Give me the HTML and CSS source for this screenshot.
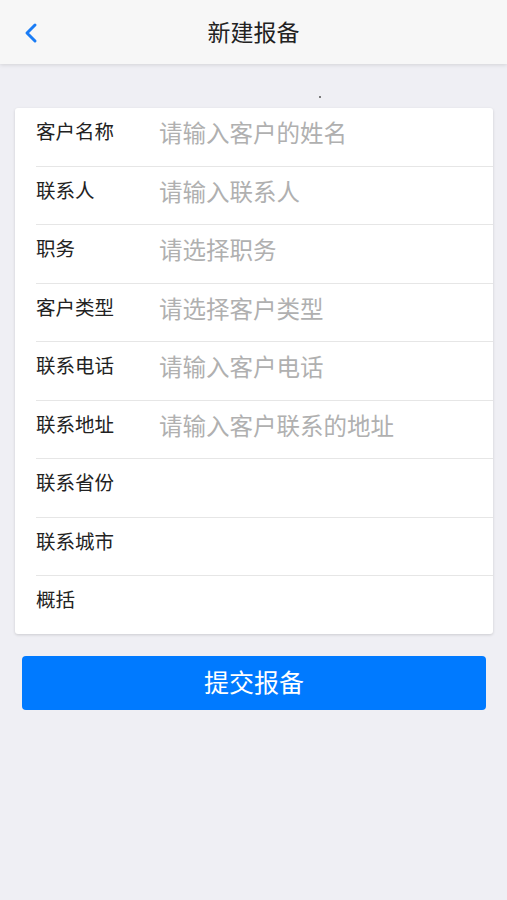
FILE: index.html
```html
<!DOCTYPE html>
<html lang="zh">
<head>
    <meta charset="UTF-8">
    <meta name="viewport" content="width=device-width, initial-scale=1.0">
    <title>新建报备</title>
    <link rel="stylesheet" href="styles.css">
</head>
<body>
    <div class="nav-bar">
        <span class="nav-back">
            <svg width="14" height="22" viewBox="0 0 14 22">
                <path d="M11 3 L3 11 L11 19" fill="none" stroke="#1a7cf5" stroke-width="3" stroke-linecap="round" stroke-linejoin="round"/>
            </svg>
        </span>
        <h1 class="nav-title">新建报备</h1>
    </div>

    <div class="dot-row"><span class="dot"></span></div>

    <div class="form-card">
        <div class="form-row">
            <label class="form-label">客户名称</label>
            <input class="form-input" type="text" placeholder="请输入客户的姓名">
        </div>
        <div class="form-row">
            <label class="form-label">联系人</label>
            <input class="form-input" type="text" placeholder="请输入联系人">
        </div>
        <div class="form-row">
            <label class="form-label">职务</label>
            <input class="form-input" type="text" placeholder="请选择职务">
        </div>
        <div class="form-row">
            <label class="form-label">客户类型</label>
            <input class="form-input" type="text" placeholder="请选择客户类型">
        </div>
        <div class="form-row">
            <label class="form-label">联系电话</label>
            <input class="form-input" type="text" placeholder="请输入客户电话">
        </div>
        <div class="form-row">
            <label class="form-label">联系地址</label>
            <input class="form-input" type="text" placeholder="请输入客户联系的地址">
        </div>
        <div class="form-row">
            <label class="form-label">联系省份</label>
        </div>
        <div class="form-row">
            <label class="form-label">联系城市</label>
        </div>
        <div class="form-row">
            <label class="form-label">概括</label>
        </div>
    </div>

    <button class="submit-button">提交报备</button>
</body>
</html>
```

FILE: styles.css
```css
body {
    margin: 0;
    padding: 0;
    background-color: #efeff4;
    font-family: "Noto Sans CJK SC", "Noto Sans", sans-serif;
    color: #222;
}

.nav-bar {
    height: 64px;
    background-color: #f7f7f7;
    box-shadow: 0 1px 4px rgba(0, 0, 0, 0.12);
    display: flex;
    align-items: center;
}

.nav-back {
    display: flex;
    margin-left: 24px;
    margin-top: 1px;
}

.nav-title {
    margin: 0 38px 2px 0;
    font-size: 23px;
    font-weight: normal;
    color: #222;
    flex: 1;
    text-align: center;
}

.dot-row {
    height: 2px;
    padding-top: 32px;
    padding-left: 319px;
}

.dot {
    display: block;
    width: 2px;
    height: 2px;
    background-color: #555;
    border-radius: 1px;
}

.form-card {
    margin: 10px 14px 0 15px;
    background-color: #fff;
    border-radius: 3px;
    box-shadow: 0 1px 3px rgba(0, 0, 0, 0.15);
    padding-left: 21px;
}

.form-row {
    height: 57.5px;
    border-bottom: 1px solid #e6e6e6;
    display: flex;
    align-items: flex-start;
}

.form-row:last-child {
    border-bottom: none;
}

.form-label {
    width: 123px;
    flex-shrink: 0;
    font-size: 19.5px;
    line-height: 20px;
    padding-top: 13px;
    color: #222;
}

.form-input {
    flex: 1;
    min-width: 0;
    border: none;
    outline: none;
    padding: 0;
    margin-top: 11px;
    font-family: inherit;
    font-size: 23.5px;
    line-height: 26px;
    height: 26px;
    color: #222;
    background: transparent;
}

.form-input::placeholder {
    color: #b0b0b0;
}

.submit-button {
    display: block;
    margin: 22px 21px 0 22px;
    width: calc(100% - 43px);
    height: 54px;
    border: none;
    border-radius: 4px;
    background-color: #007aff;
    color: #fff;
    font-family: inherit;
    font-size: 25px;
    padding: 0 0 4px 0;
}
```
